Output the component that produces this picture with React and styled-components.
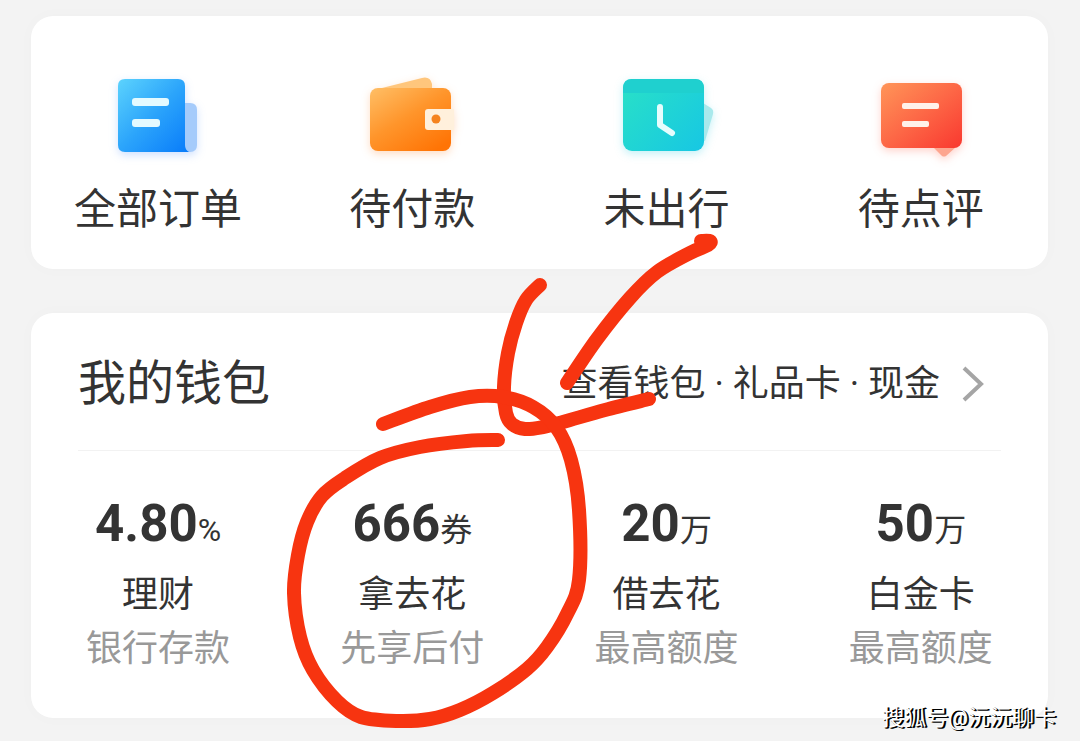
import styled, { createGlobalStyle } from "styled-components";

const GlobalStyle = createGlobalStyle`
  * {
    box-sizing: border-box;
  }
  body {
    margin: 0;
    background: #f3f3f3;
    color: #333;
    font-family: Roboto, "Noto Sans CJK SC", sans-serif;
  }
  a {
    color: inherit;
    text-decoration: none;
  }
`;

const Page = styled.main`
  position: relative;
  display: flex;
  flex-direction: column;
  gap: 44px;
  padding: 16px 32px 23px 31px;
  overflow: hidden;
`;
const Card = styled.section`
  background: white;
  border-radius: 22px;
  box-shadow: 0 0 18px rgba(0, 0, 0, 0.02);
`;
const Columns = styled.div`
  display: grid;
  grid-template-columns: repeat(4, 1fr);
  padding: ${(props) => (props.$wallet ? "43px 0 42px" : "56px 0 33px")};
`;
const Order = styled.a`
  display: flex;
  flex-direction: column;
  align-items: center;
  gap: 24px;
  font-size: 42px;
  line-height: 52px;
  white-space: nowrap;
`;
const OrderIcon = styled.svg`
  width: 120px;
  height: 88px;
  overflow: visible;
  filter: drop-shadow(0 3px 4px ${(props) => props.$glow});
`;
const Header = styled.header`
  display: flex;
  align-items: center;
  justify-content: space-between;
  height: 138px;
  margin: 0 47px;
  padding: 4px 17px 0 0;
  border-bottom: 1px solid #f2f2f2;
`;
const Title = styled.h2`
  margin: 0;
  font-size: 48px;
  font-weight: 400;
  line-height: 60px;
`;
const More = styled.a`
  display: flex;
  align-items: center;
  gap: 22px;
  font-size: 36px;
  line-height: 54px;
  white-space: nowrap;
`;
const Chevron = styled.svg`
  width: 22px;
  height: 36px;
  fill: none;
  stroke: #a5a5a5;
  stroke-width: 4;
`;
const Item = styled.a`
  display: flex;
  flex-direction: column;
  align-items: center;
  white-space: nowrap;
`;
const Value = styled.strong`
  margin-bottom: 8px;
  font-size: 51px;
  line-height: 60px;
`;
const Unit = styled.span`
  font-size: 32px;
  font-weight: 400;
`;
const Label = styled.span`
  font-size: 36px;
  line-height: 54px;
  color: ${(props) => (props.$muted ? "#999" : "#333")};
`;
const Marker = styled.svg`
  position: absolute;
  top: 0;
  left: 0;
  width: 1080px;
  height: 741px;
  pointer-events: none;
  fill: none;
  stroke: #f73410;
  stroke-width: 14;
  stroke-linecap: round;
  stroke-linejoin: round;
`;
const Watermark = styled.span`
  position: absolute;
  right: 24px;
  bottom: 6px;
  color: white;
  font-size: 22px;
  line-height: 34px;
  text-shadow: 1px 1px 0 black, 2px 1px 0 black;
`;

function AllOrdersIcon() {
  return (
    <OrderIcon viewBox="0 0 120 88" $glow="rgba(60, 130, 255, 0.25)">
      <linearGradient id="blue" x1="0" y1="0" x2="1" y2="1">
        <stop offset="0" stopColor="#5cd3fd" />
        <stop offset="0.5" stopColor="#2ba4fb" />
        <stop offset="1" stopColor="#087bfa" />
      </linearGradient>
      <path d="M86 31h6q7 0 7 7v35q0 7-7 7h-6z" fill="#a5cbfb" />
      <path d="M27 7h53q7 0 7 7v59q0 5 4 7H27q-7 0-7-7V14q0-7 7-7z" fill="url(#blue)" />
      <rect x="34" y="26" width="37" height="8" rx="3" fill="#e4faff" />
      <rect x="34" y="47" width="28" height="8" rx="3" fill="#e4faff" />
    </OrderIcon>
  );
}

function UnpaidIcon() {
  return (
    <OrderIcon viewBox="0 0 120 88" $glow="rgba(255, 120, 20, 0.25)">
      <linearGradient id="orange" x1="0" y1="0" x2="0.8" y2="1">
        <stop offset="0" stopColor="#ffbf66" />
        <stop offset="0.5" stopColor="#ff952b" />
        <stop offset="1" stopColor="#ff7405" />
      </linearGradient>
      <path d="M26 17L70 6q8-2 10 6v8H26z" fill="#ffc67c" />
      <rect x="18" y="16" width="81" height="63" rx="8" fill="url(#orange)" />
      <path d="M76 37h26v21H76q-3 0-3-3V40q0-3 3-3z" fill="#fff0dc" />
      <circle cx="84" cy="47" r="4.5" fill="#f5831f" />
    </OrderIcon>
  );
}

function UpcomingIcon() {
  return (
    <OrderIcon viewBox="0 0 120 88" $glow="rgba(20, 200, 225, 0.25)">
      <linearGradient id="teal" x1="0" y1="0.1" x2="1" y2="0.9">
        <stop offset="0" stopColor="#28e0c8" />
        <stop offset="1" stopColor="#18c8e2" />
      </linearGradient>
      <path d="M96 31l8 5q3 2 2 6l-8 27h-2z" fill="#a9e9ec" />
      <rect x="16" y="7" width="81" height="72" rx="9" fill="url(#teal)" />
      <path d="M16 21v-5q0-9 9-9h63q9 0 9 9v5z" fill="#1fd0cf" />
      <path d="M53 35v18l12 8" fill="none" stroke="#e6fdfd" strokeWidth="6" strokeLinecap="round" strokeLinejoin="round" />
    </OrderIcon>
  );
}

function ReviewIcon() {
  return (
    <OrderIcon viewBox="0 0 120 88" $glow="rgba(255, 80, 50, 0.25)">
      <linearGradient id="red" x1="0" y1="0" x2="1" y2="1">
        <stop offset="0" stopColor="#ff9558" />
        <stop offset="0.5" stopColor="#fd6746" />
        <stop offset="1" stopColor="#f9382f" />
      </linearGradient>
      <path d="M72 75h23l-10 9q-2 1-4 0z" fill="#fda58f" />
      <rect x="20" y="11" width="81" height="65" rx="8" fill="url(#red)" />
      <rect x="41" y="31" width="37" height="6" rx="2" fill="#fff1ea" />
      <rect x="41" y="49" width="27" height="6" rx="2" fill="#fff1ea" />
    </OrderIcon>
  );
}

const orders = [
  { label: "全部订单", Icon: AllOrdersIcon },
  { label: "待付款", Icon: UnpaidIcon },
  { label: "未出行", Icon: UpcomingIcon },
  { label: "待点评", Icon: ReviewIcon },
];

const wallet = [
  { value: "4.80", unit: "%", name: "理财", note: "银行存款" },
  { value: "666", unit: "券", name: "拿去花", note: "先享后付" },
  { value: "20", unit: "万", name: "借去花", note: "最高额度" },
  { value: "50", unit: "万", name: "白金卡", note: "最高额度" },
];

// hand drawn strokes, as the points the pen went through
const strokes = [
  [[540, 285], [526, 300], [516, 323], [508, 353], [504, 387], [506, 413], [512, 424], [525, 429], [543, 427], [563, 422], [605, 410], [649, 399]],
  [[701, 241], [710, 241], [708, 245], [690, 253], [657, 272], [630, 298], [597, 339], [567, 383]],
  [
    [383, 424], [430, 407], [470, 397], [503, 397], [533, 407], [556, 427], [571, 460], [579, 510],
    [579, 580], [567, 614], [547, 647], [527, 669], [493, 693], [460, 710], [430, 719], [397, 721],
    [361, 717], [337, 701], [313, 670], [300, 637], [294, 593], [298, 555], [307, 522], [322, 496],
    [345, 478], [380, 458], [420, 447], [467, 441], [498, 440],
  ],
];

function smooth(points) {
  let d = `M${points[0]}`;
  for (let i = 0; i < points.length - 1; i++) {
    const a = points[i - 1] || points[i];
    const b = points[i];
    const c = points[i + 1];
    const e = points[i + 2] || c;
    d += `C${b[0] + (c[0] - a[0]) / 6},${b[1] + (c[1] - a[1]) / 6} `;
    d += `${c[0] - (e[0] - b[0]) / 6},${c[1] - (e[1] - b[1]) / 6} ${c}`;
  }
  return d;
}

export default function App() {
  return (
    <>
      <GlobalStyle />
      <Page>
        <Card>
          <Columns>
            {orders.map(({ label, Icon }) => (
              <Order href="#" key={label}>
                <Icon />
                {label}
              </Order>
            ))}
          </Columns>
        </Card>
        <Card>
          <Header>
            <Title>我的钱包</Title>
            <More href="#">
              查看钱包 · 礼品卡 · 现金
              <Chevron viewBox="0 0 22 36">
                <path d="M2 2l17 16L2 34" />
              </Chevron>
            </More>
          </Header>
          <Columns $wallet>
            {wallet.map((item) => (
              <Item href="#" key={item.name}>
                <Value>
                  {item.value}
                  <Unit>{item.unit}</Unit>
                </Value>
                <Label>{item.name}</Label>
                <Label $muted>{item.note}</Label>
              </Item>
            ))}
          </Columns>
        </Card>
        <Marker viewBox="0 0 1080 741">
          {strokes.map((points, i) => (
            <path key={i} d={smooth(points)} />
          ))}
        </Marker>
        <Watermark>搜狐号@沅沅聊卡</Watermark>
      </Page>
    </>
  );
}
